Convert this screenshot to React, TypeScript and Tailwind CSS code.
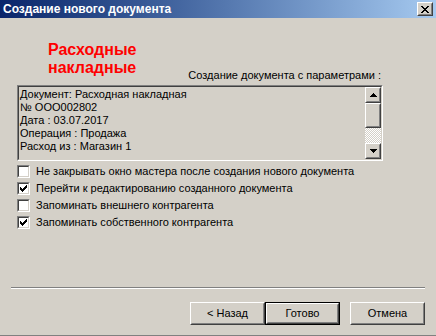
import type { ReactNode } from 'react'

const font = { fontFamily: '"Liberation Sans", Arial, sans-serif' }

function Raised({ children, className = '' }: { children?: ReactNode; className?: string }) {
  return (
    <div className={`border border-t-white border-l-white border-r-[#404040] border-b-[#404040] ${className}`}>
      <div className="w-full h-full border border-t-[#d4d0c8] border-l-[#d4d0c8] border-r-[#808080] border-b-[#808080] bg-[#d4d0c8] flex items-center justify-center">
        {children}
      </div>
    </div>
  )
}

function Sunken({ children, className = '', fill = 'bg-white' }: { children?: ReactNode; className?: string; fill?: string }) {
  return (
    <div className={`border border-t-[#808080] border-l-[#808080] border-r-white border-b-white ${className}`}>
      <div className={`w-full h-full border border-t-[#404040] border-l-[#404040] border-r-[#d4d0c8] border-b-[#d4d0c8] ${fill}`}>
        {children}
      </div>
    </div>
  )
}

function Arrow({ down }: { down?: boolean }) {
  return (
    <svg width="7" height="4" viewBox="0 0 7 4" shapeRendering="crispEdges">
      {down ? (
        <path d="M0 0h7v1H0zM1 1h5v1H1zM2 2h3v1H2zM3 3h1v1H3z" fill="#000" />
      ) : (
        <path d="M3 0h1v1H3zM2 1h3v1H2zM1 2h5v1H1zM0 3h7v1H0z" fill="#000" />
      )}
    </svg>
  )
}

function Check() {
  return (
    <svg width="7" height="7" viewBox="0 0 7 7" shapeRendering="crispEdges">
      <path d="M6 0h1v1H6zM5 1h2v1H5zM0 2h1v1H0zM4 2h3v1H4zM0 3h2v1H0zM3 3h3v1H3zM0 4h5v1H0zM1 5h3v1H1zM2 6h1v1H2z" fill="#000" />
    </svg>
  )
}

function CheckRow({ checked, label }: { checked?: boolean; label: string }) {
  return (
    <div className="flex items-center h-[17px]">
      <Sunken className="w-[13px] h-[13px] shrink-0">
        <div className="w-full h-full flex items-center justify-center">{checked && <Check />}</div>
      </Sunken>
      <span className="ml-[6px] text-[11px] leading-[13px] text-black">{label}</span>
    </div>
  )
}

const lines = [
  'Документ: Расходная накладная',
  '№ ООО002802',
  'Дата : 03.07.2017',
  'Операция : Продажа',
  'Расход из : Магазин 1',
]

export default function App() {
  return (
    <div className="w-[436px] h-[336px] bg-[#d4d0c8] flex flex-col overflow-hidden" style={font}>
      {/* Title bar */}
      <div className="h-[18px] shrink-0 flex items-center justify-between bg-gradient-to-r from-[#0a246a] to-[#a6caf0] pl-[3px] pr-[3px]">
        <span className="text-white font-bold text-[12px] leading-[18px]">Создание нового документа</span>
        <Raised className="w-[16px] h-[14px]">
          <svg width="8" height="7" viewBox="0 0 8 7" shapeRendering="crispEdges">
            <path d="M0 0h2v1H0zM6 0h2v1H6zM1 1h2v1H1zM5 1h2v1H5zM2 2h4v1H2zM3 3h2v1H3zM2 4h4v1H2zM1 5h2v1H1zM5 5h2v1H5zM0 6h2v1H0zM6 6h2v1H6z" fill="#000" />
          </svg>
        </Raised>
      </div>

      {/* Header row */}
      <div className="mt-[23px] h-[41px] flex justify-between pl-[48px] pr-[55px]">
        <div className="text-[#ff0000] font-bold text-[16px] leading-[18px]">
          <div>Расходные</div>
          <div>накладные</div>
        </div>
        <div className="self-end text-[11px] leading-[13px] text-black">Создание документа с параметрами :</div>
      </div>

      {/* Document summary */}
      <Sunken className="mt-[3px] ml-[17px] w-[366px] h-[76px]" fill="bg-[#d4d0c8]">
        <div className="flex h-full">
          <div className="flex-1 pl-[1px] pt-[1px] text-[11px] leading-[13px] text-black">
            {lines.map((l) => (
              <div key={l}>{l}</div>
            ))}
          </div>
          <div className="w-[16px] flex flex-col">
            <Raised className="h-[16px]">
              <Arrow />
            </Raised>
            <Raised className="h-[25px]" />
            <div className="flex-1 bg-[repeating-conic-gradient(#ffffff_0_25%,#d4d0c8_0_50%)] bg-size-[2px_2px]" />
            <Raised className="h-[16px]">
              <Arrow down />
            </Raised>
          </div>
        </div>
      </Sunken>

      {/* Options */}
      <div className="mt-[2px] ml-[17px] flex flex-col">
        <CheckRow label="Не закрывать окно мастера после создания нового документа" />
        <CheckRow checked label="Перейти к редактированию созданного документа" />
        <CheckRow label="Запоминать внешнего контрагента" />
        <CheckRow checked label="Запоминать собственного контрагента" />
      </div>

      {/* Separator */}
      <div className="mt-[56px] ml-[11px] w-[414px] border-t border-t-[#808080] border-b border-b-white" />

      {/* Buttons */}
      <div className="mt-[13px] flex pl-[190px] h-[23px]">
        <Raised className="w-[75px] h-[23px]">
          <span className="text-[11px] text-black">&lt; Назад</span>
        </Raised>
        <div className="w-[75px] h-[23px] border border-black">
          <Raised className="w-full h-full">
            <span className="text-[11px] text-black">Готово</span>
          </Raised>
        </div>
        <Raised className="ml-[10px] w-[75px] h-[23px]">
          <span className="text-[11px] text-black">Отмена</span>
        </Raised>
      </div>

      <div className="flex-1" />
      <div className="h-[1px] bg-[#808080]" />
    </div>
  )
}
